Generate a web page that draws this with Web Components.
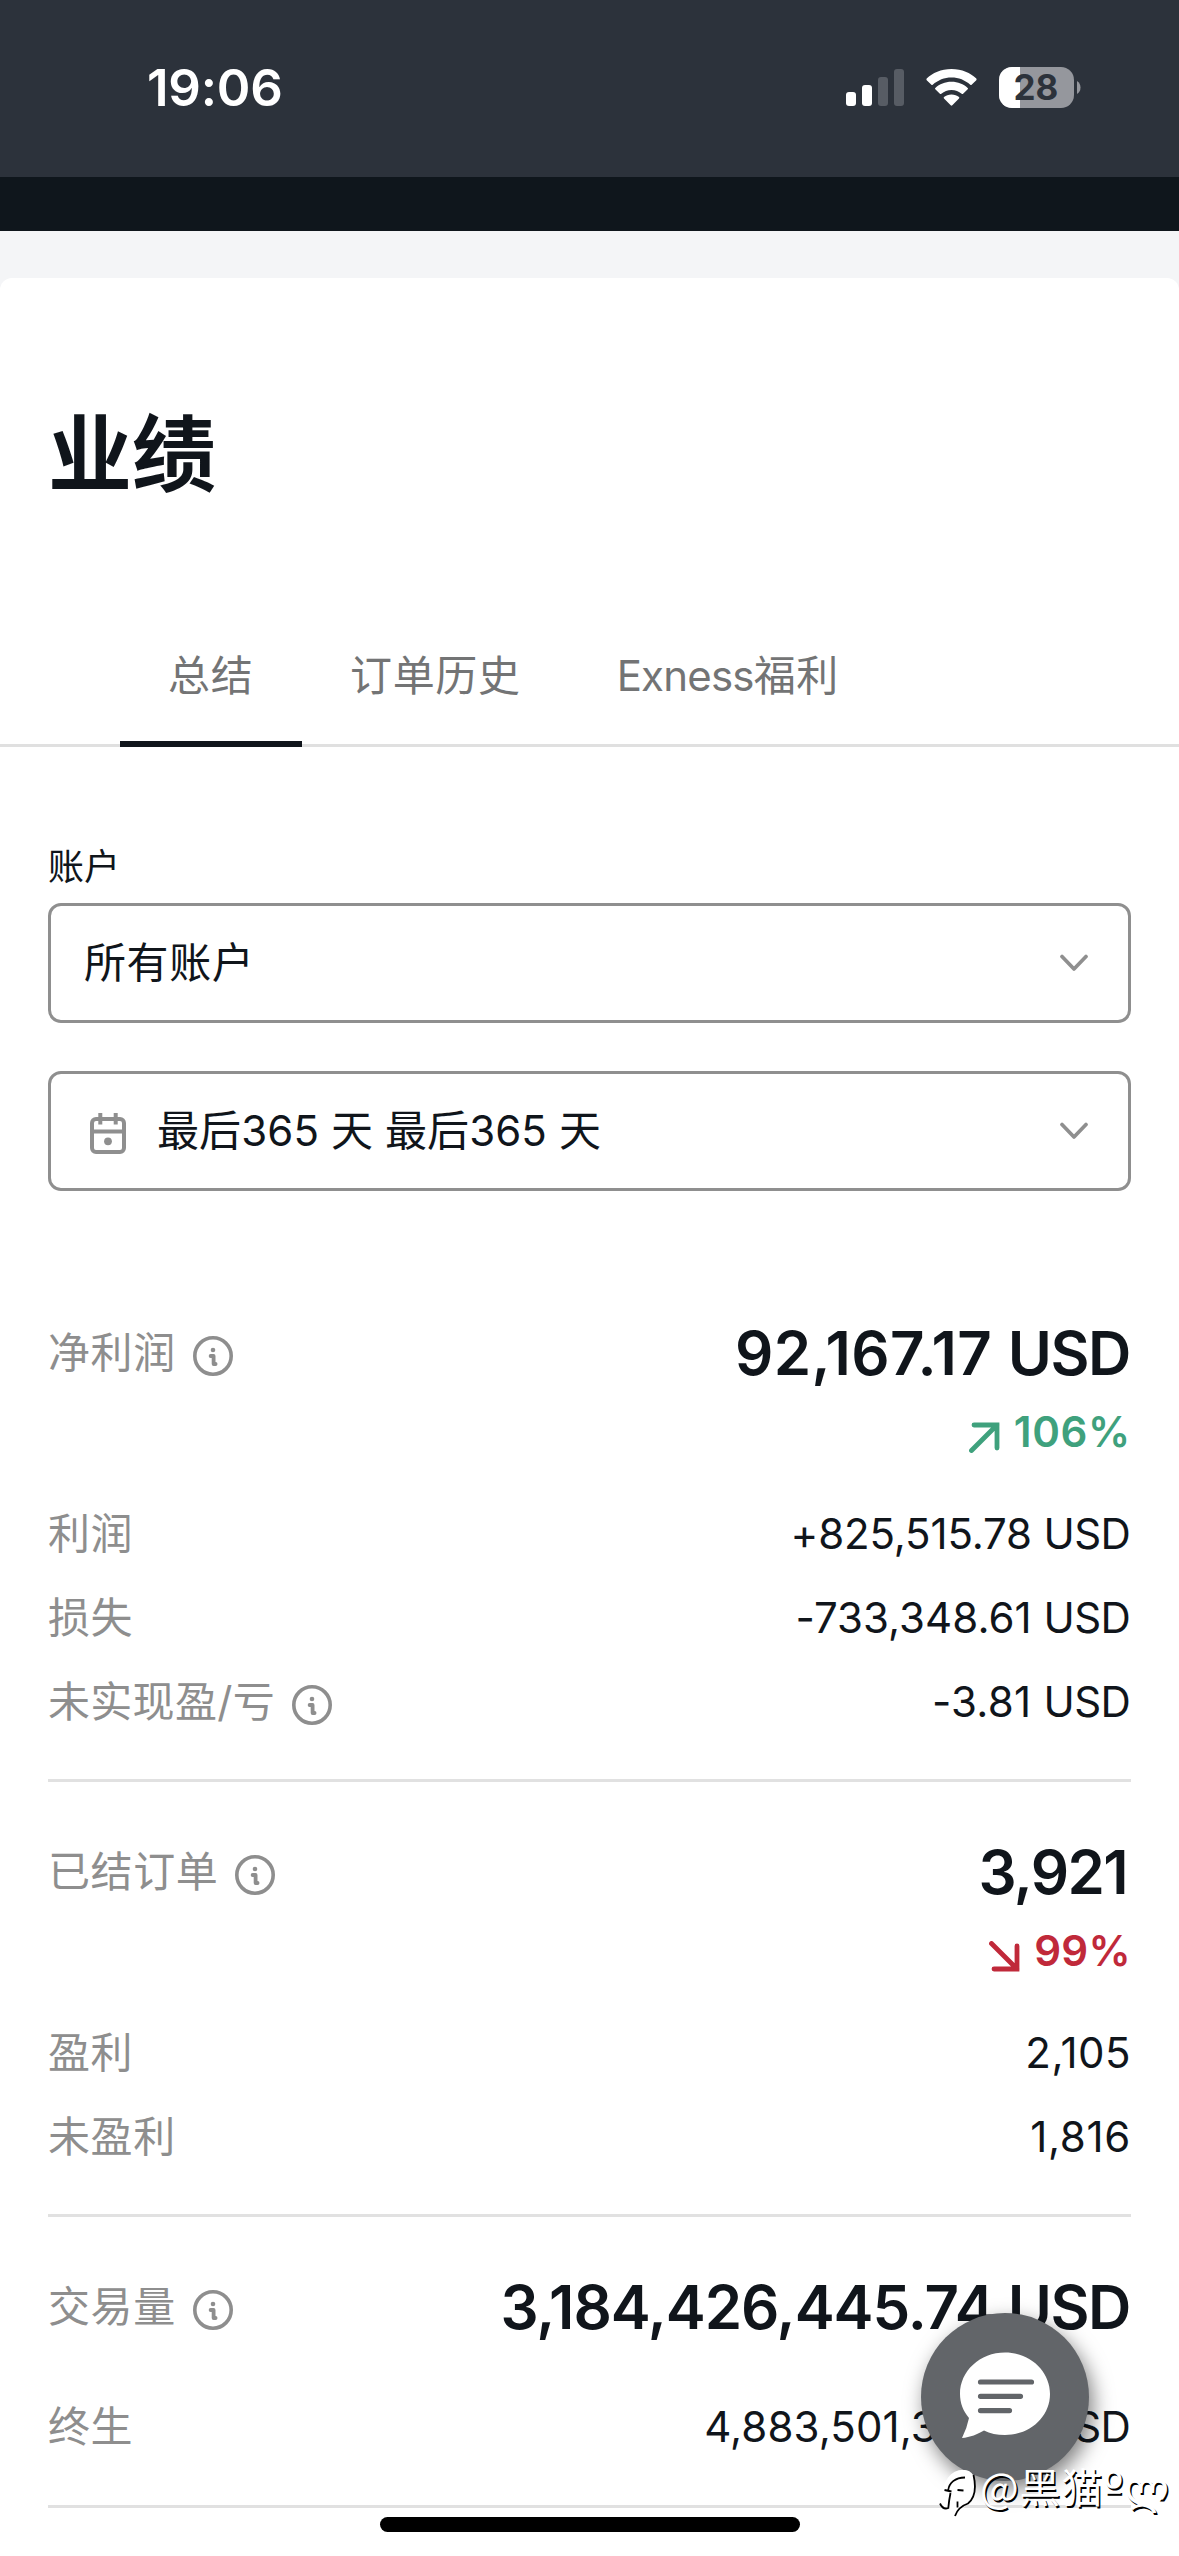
<!DOCTYPE html>
<html lang="zh-CN">
<head>
<meta charset="utf-8">
<title>业绩</title>
<style>
html,body{margin:0;padding:0}
body{width:1179px;height:2556px;overflow:hidden;background:#fff;position:relative;color:#10151b;
font-family:Inter,"Noto Sans CJK SC",sans-serif;font-size:42px}
</style>
</head>
<body>
<app-status-bar time="19:06" battery="28"></app-status-bar>
<app-card heading="业绩">
  <app-tabs>
    <app-tab active>总结</app-tab>
    <app-tab>订单历史</app-tab>
    <app-tab><span style="letter-spacing:-.8px">Exness</span>福利</app-tab>
  </app-tabs>
  <app-fields>
    <app-select label="账户">所有账户</app-select>
    <app-select icon="calendar" style="--track:.1px">最后365 天 最后365 天</app-select>
  </app-fields>
  <stat-group>
    <stat-total info label="净利润" unit="USD" style="--track:.35px">92,167.17</stat-total>
    <stat-trend dir="up" style="--track:.7px">106%</stat-trend>
    <stat-row label="利润" unit="USD" style="--track:-.15px">+825,515.78</stat-row>
    <stat-row label="损失" unit="USD" style="--track:.05px">-733,348.61</stat-row>
    <stat-row label="未实现盈/亏" info unit="USD" style="--track:.3px;--label-track:.3px">-3.81</stat-row>
  </stat-group>
  <stat-group>
    <stat-total info label="已结订单" style="--track:-1.6px;--end:4px">3,921</stat-total>
    <stat-trend dir="down" style="--track:.3px">99%</stat-trend>
    <stat-row label="盈利" style="--track:.5px">2,105</stat-row>
    <stat-row label="未盈利" style="--track:.7px">1,816</stat-row>
  </stat-group>
  <stat-group compact>
    <stat-total info label="交易量" unit="USD" style="--track:-1.030px">3,184,426,445.74</stat-total>
    <stat-row label="终生" unit="USD" style="--track:.12px">4,883,501,311.74</stat-row>
  </stat-group>
</app-card>
<chat-button></chat-button>
<home-indicator></home-indicator>
<photo-mark>@黑猫<span style="font-family:'DejaVu Sans',sans-serif;font-size:43px;line-height:40px">º</span><span style="font-size:42px">ლ</span></photo-mark>
<script>
const define = (name, render) => customElements.define(name, class extends HTMLElement {
  connectedCallback() {
    if (!this.shadowRoot) this.attachShadow({ mode: 'open' }).innerHTML = render(this);
  }
});
const INFO = `<svg width="40" height="40" viewBox="0 0 40 40" fill="none" stroke="#8e8e8e">
<circle cx="20" cy="20" r="18.2" stroke-width="3.6"/>
<circle cx="20" cy="14" r="2.3" fill="#8e8e8e" stroke="none"/>
<path d="M17.600 20h3v8h2" stroke-width="3.800" stroke-linecap="round" stroke-linejoin="round"/></svg>`;
const LABEL = `.l{display:flex;align-items:center;gap:17px;color:#8e8e8e;line-height:60px;letter-spacing:var(--label-track,.6px)}
.l svg{margin-top:8px}
.l span{margin-top:2px}
.v{white-space:pre;margin-top:2px;letter-spacing:var(--track,0);padding-right:var(--end,0)}`;
const unit = el => el.hasAttribute('unit') ? ` <span class="u">${el.getAttribute('unit')}</span>` : '';

define('app-status-bar', el => `<style>
:host{display:block;background:#0f161c;height:231px}
.bar{display:flex;align-items:flex-start;justify-content:space-between;box-sizing:border-box;height:177px;background:#2c323b;padding:66px 98px 0 147px}
.time{font-size:51px;font-weight:600;line-height:44px;color:#fff;letter-spacing:-.2px}
.icons{display:flex;align-items:center}
.sig{margin-right:22px}.wifi{margin-right:22px}
</style><div class="bar"><span class="time">${el.getAttribute('time')}</span><div class="icons">
<svg class="sig" width="58" height="44" viewBox="0 0 58 44"><g fill="#fff"><rect y="26" width="10" height="14" rx="3"/><rect x="16" y="19" width="10" height="21" rx="3"/><g fill="#575c64"><rect x="32" y="11" width="10" height="29" rx="3"/><rect x="48" y="3" width="10" height="37" rx="3"/></g></g></svg>
<svg class="wifi" width="51" height="44" viewBox="0 0 51 44" fill="#fff"><path d="M25.5 3C36 3 44.500 7 50.300 12.600Q51 13.400 50.300 14.200L45.600 18.800Q45 19.400 44.300 18.800C39 14 32.700 11.500 25.500 11.500S12 14 6.700 18.800Q6 19.400 5.400 18.800L.7 14.200Q0 13.400.7 12.600C6.500 7 15 3 25.500 3Z"/><path d="M25.500 15.700C32 15.700 37.500 18 41.700 21.900Q42.400 22.600 41.700 23.300L37.100 27.800Q36.400 28.400 35.700 27.800C32.800 25.400 29.500 24 25.500 24S18.200 25.400 15.300 27.800Q14.600 28.400 13.900 27.800L9.300 23.300Q8.600 22.600 9.300 21.900C13.500 18 19 15.700 25.500 15.700Z"/><path d="M25.500 28.400C28.500 28.400 31 29.400 33 31Q33.700 31.700 33 32.400L26.300 39.300Q25.500 40.100 24.700 39.300L18 32.400Q17.300 31.700 18 31C20 29.400 22.500 28.400 25.500 28.400Z"/></svg>
<svg width="82" height="44" viewBox="0 0 82 44"><defs><clipPath id="c"><rect y="1" width="75" height="41" rx="13"/></clipPath></defs><g clip-path="url(#c)"><path fill="#95979d" d="M0 0h76v44H0z"/><path fill="#fff" d="M0 0h21v44H0z"/></g><path fill="#95979d" d="M78 15q3.500 2.200 3.500 6.500T78 28Z"/><text x="37" y="34" text-anchor="middle" font-size="35" font-weight="700" fill="#2c323b" font-family="Inter,sans-serif">${el.getAttribute('battery')}</text></svg>
</div></div>`);

define('app-card', el => `<style>
:host{display:block;background:#f4f5f7;padding-top:47px}
.card{background:#fff;border-radius:12px 12px 0 0;height:2278px;padding-top:115px;box-sizing:border-box}
h1{margin:0;padding-left:48px;font-size:84px;line-height:124px;font-weight:700}
</style><div class="card"><h1>${el.getAttribute('heading')}</h1><slot></slot></div>`);

define('app-tabs', () => `<style>
:host{display:flex;height:141px;margin-top:89px;padding-left:120px;box-shadow:inset 0 -3px #e0e0e0}
</style><slot></slot>`);
define('app-tab', () => `<style>
:host{display:block;box-sizing:border-box;padding:37px 48px 0;line-height:66px;color:#737475;letter-spacing:.66px;border-bottom:6px solid transparent}
:host([active]){min-width:182px;border-color:#10151b}
</style><slot></slot>`);

define('app-fields', () => `<style>
:host{display:flex;flex-direction:column;gap:48px;padding:93px 48px 0;height:423px}
</style><slot></slot>`);
define('app-select', el => `<style>
:host{display:block}
label{display:block;font-size:36px;line-height:54px;margin-bottom:9px}
.box{display:flex;align-items:center;height:120px;box-sizing:border-box;border:3px solid #8f8f8f;border-radius:13px;padding:0 40px 0 33px;line-height:60px;letter-spacing:var(--track,.6px)}
.cal{margin:4px 31px 0 6px}
.chev{margin-left:auto}
</style>${el.hasAttribute('label') ? `<label>${el.getAttribute('label')}</label>` : ''}
<div class="box">${el.hasAttribute('icon') ? `<svg class="cal" width="36" height="41" viewBox="0 0 36 41" fill="none" stroke="#8f8f8f" stroke-width="4"><rect x="2" y="6" width="32" height="33" rx="4"/><path d="M2 18.500h32M10.300 0v11.500M25.700 0v11.500"/><circle cx="18" cy="28.300" r="3.900" fill="#8f8f8f" stroke="none"/></svg>` : ''}<span><slot></slot></span>
<svg class="chev" width="28" height="18" viewBox="0 0 28 18" fill="none" stroke="#8f8f8f" stroke-width="3.700" stroke-linecap="round" stroke-linejoin="round"><path d="M2 2.500l12 12.500L26 2.500"/></svg></div>`);

define('stat-group', () => `<style>
:host{display:block;margin:0 48px;padding:53px 0 36px;border-bottom:3px solid #e1e1e1}
:host([compact]){--row-gap:42px;padding-bottom:37px}
</style><slot></slot>`);
define('stat-total', el => `<style>
:host{display:flex;justify-content:space-between;align-items:center;height:72px;margin-bottom:var(--row-gap,13px)}
${LABEL}
.v{font-size:60px;font-weight:600;line-height:72px}
.u{letter-spacing:-1.400px;padding-right:1px}
</style><span class="l"><span>${el.getAttribute('label')}</span>${INFO}</span><span class="v"><slot></slot>${unit(el)}</span>`);
define('stat-trend', el => { const up = el.getAttribute('dir') === 'up'; return `<style>
:host{display:flex;justify-content:flex-end;align-items:center;height:60px;margin-bottom:30px;gap:14px;font-weight:600;line-height:60px;letter-spacing:var(--track,0);color:${up ? '#3fa17d' : '#c0293a'}}
svg{margin-top:12px}
span{margin-top:2px}
</style><svg width="31" height="31" viewBox="0 0 31 31" fill="none" stroke="currentColor" stroke-width="4.800" stroke-linecap="round">${up ? '<path d="M2.500 28.500L28 3M5 3H28V26"/>' : '<path d="M2.500 2.500L28 28M5 28H28V5"/>'}</svg><span><slot></slot></span>`; });
define('stat-row', el => `<style>
:host{display:flex;justify-content:space-between;align-items:center;height:84px;line-height:60px}
${LABEL}
.u{letter-spacing:-.7px;padding-right:1px}
</style><span class="l"><span>${el.getAttribute('label')}</span>${el.hasAttribute('info') ? INFO : ''}</span><span class="v"><slot></slot>${unit(el)}</span>`);

define('chat-button', () => `<style>
:host{position:absolute;left:921px;top:2313px;width:168px;height:168px;border-radius:50%;background:#626569;box-shadow:4px 8px 20px rgba(0,0,0,.5)}
svg{display:block}
</style><svg width="168" height="168" viewBox="0 0 168 168"><path fill="#fff" d="M84 39.500C109 39.500 129 58 129 81S109 122 84 122C76 122 69 120.500 63 117.500C57 121 49 124.500 41 125Q46 115 48 105C42 98 39 90 39 81C39 58 59 39.500 84 39.500Z"/><path d="M59.500 69h51M59.500 83.300h40M59.500 97.600h29" stroke="#626569" stroke-width="5.200" stroke-linecap="round"/></svg>`);
define('home-indicator', () => `<style>
:host{position:absolute;left:380px;top:2517px;width:420px;height:15px;border-radius:8px;background:#000}
</style>`);
define('photo-mark', () => `<style>
:host{position:absolute;left:937px;top:2460px;display:flex;align-items:flex-start;gap:3px;color:#fff;font-size:41px;line-height:50px;letter-spacing:.8px;white-space:nowrap;font-family:"Noto Sans CJK SC","DejaVu Sans",sans-serif;text-shadow:1.500px 1.500px .5px #000}
svg{margin-top:6px}
</style><svg width="40" height="54" viewBox="0 0 40 54" fill="none"><path d="M2 38C5 18 12 5 24 4C36 3 39 10 37.500 27C35 38 24 41 18 50Q18 42 8 43.500Z" fill="#fff"/><path d="M11.300 24C12 17 18 11.500 28 11.500M7.500 24l7 1.500M20.500 24l6 .5M13.500 27Q12 34 11.300 42Q6 44 3 37.500M36.500 9C39 20 39 31 31 37.500Q21 41 18 50M20.500 35.500v6" stroke="#000" stroke-width="1.800"/></svg><span><slot></slot></span>`);
</script>
</body>
</html>
